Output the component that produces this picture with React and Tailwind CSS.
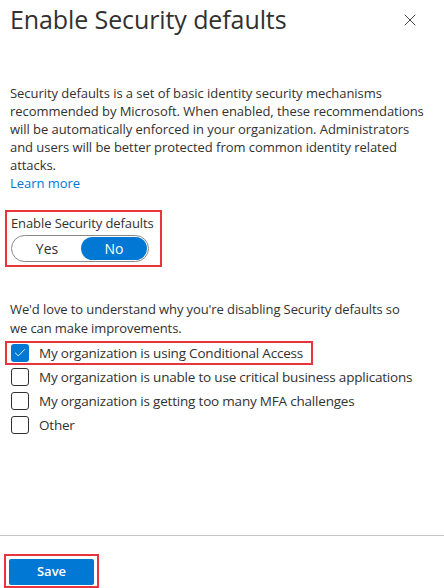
import { Check, X } from "lucide-react";

const reasons = [
  { label: "My organization is using Conditional Access", checked: true },
  { label: "My organization is unable to use critical business applications", checked: false },
  { label: "My organization is getting too many MFA challenges", checked: false },
  { label: "Other", checked: false },
];

function Checkbox({ checked }) {
  return checked ? (
    <span className="flex h-[18px] w-[18px] shrink-0 items-center justify-center rounded-[3px] bg-[#0078d4]">
      <Check className="h-3.5 w-3.5 text-white" strokeWidth={1.5} />
    </span>
  ) : (
    <span className="h-[18px] w-[18px] shrink-0 rounded-[3px] border border-[#323130] bg-white" />
  );
}

export default function App() {
  return (
    <div className="flex h-[588px] w-[444px] flex-col bg-white text-[#323130]" style={{ fontFamily: '"Open Sans", "Noto Sans", sans-serif' }}>
      <div className="flex items-start justify-between pl-[10px] pr-[24px] pt-[1px]">
        <h1 className="text-[25px] font-normal leading-[36px] tracking-[-0.1px]">Enable Security defaults</h1>
        <button type="button" className="mt-[9px] text-[#323130]" aria-label="Close">
          <X className="h-[20px] w-[20px]" strokeWidth={1.1} />
        </button>
      </div>

      <div className="px-[10px] pt-[47px] text-[13px] leading-[18px] tracking-[-0.05px]">
        <p>
          Security defaults is a set of basic identity security mechanisms
          <br />
          recommended by Microsoft. When enabled, these recommendations
          <br />
          will be automatically enforced in your organization. Administrators
          <br />
          and users will be better protected from common identity related
          <br />
          attacks.
        </p>
        <a href="#" className="text-[#0078d4]">Learn more</a>
      </div>

      <div className="ml-[5px] mt-[18px] w-[157px] border-2 border-[#e8343c] px-[4px] pb-[3px] pt-[2px]">
        <div className="text-[13px] leading-[18px] tracking-[-0.1px]">Enable Security defaults</div>
        <div className="mt-[3px] flex h-[27px] w-[138px] items-center rounded-full border border-[#8a8886] p-[1px]">
          <span className="flex h-full flex-1 items-center justify-center text-[14px]">Yes</span>
          <span className="flex h-full w-[66px] items-center justify-center rounded-full bg-[#0078d4] text-[14px] text-white">No</span>
        </div>
      </div>

      <p className="px-[10px] pt-[33px] text-[13px] leading-[19px] tracking-[-0.1px]">
        We'd love to understand why you're disabling Security defaults so
        <br />
        we can make improvements.
      </p>

      <ul className="mt-[3px] flex flex-col">
        {reasons.map((reason) => (
          <li key={reason.label} className={`flex h-[24px] items-center gap-[10px] text-[13.5px] tracking-[-0.2px] ${reason.checked ? "ml-[5px] w-[308px] border-2 border-[#e8343c] pl-[4px]" : "pl-[11px]"}`}>
            <Checkbox checked={reason.checked} />
            <span>{reason.label}</span>
          </li>
        ))}
      </ul>

      <div className="mt-auto border-t border-[#c8c6c4]" />
      <div className="ml-[4px] mt-[18px] h-[34px] w-[95px] border-2 border-[#e8343c] px-[3px] pt-[2px]">
        <button type="button" className="h-[26px] w-full rounded-[2px] bg-[#0078d4] text-[13px] font-semibold text-white">
          Save
        </button>
      </div>
    </div>
  );
}
